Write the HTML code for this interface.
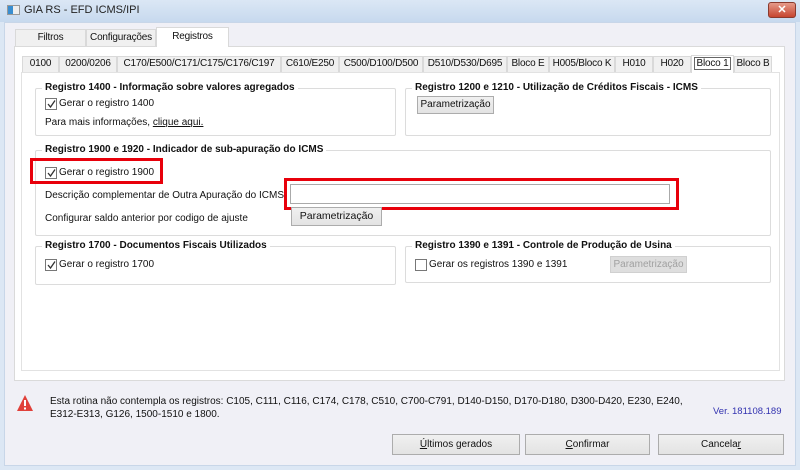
<!DOCTYPE html>
<html><head><meta charset="utf-8"><style>
*{box-sizing:border-box;margin:0;padding:0}
body{width:800px;height:470px;overflow:hidden;background:#dce7f4;font-family:"Liberation Sans",sans-serif;font-size:10px;color:#111;position:relative}
.a{position:absolute}
.title{left:0;top:0;width:800px;height:22px;background:linear-gradient(#dbe7f5,#c7d9ee);}
.win{left:4px;top:22px;width:792px;height:444px;background:#f0f0f6;border:1px solid #c8d6e8}
.tab{position:absolute;height:17px;border:1px solid #d9d9d9;border-bottom:none;background:#f0f0f0;text-align:center;line-height:15px;white-space:nowrap;font-size:10px;letter-spacing:-0.2px}
.panel{position:absolute;background:#fff;border:1px solid #dadada}
.gb{position:absolute;border:1px solid #dcdcdc;border-radius:2px}
.gt{position:absolute;top:-7px;left:6px;background:#fff;padding:0 3px;font-weight:bold;font-size:10px;white-space:nowrap}
.cb{position:absolute;width:12px;height:12px;border:1px solid #777;background:#fff}
.cb svg{position:absolute;left:0;top:0}
.btn{position:absolute;border:1px solid #acacac;background:linear-gradient(#f0f0f0,#e3e3e3);text-align:center;white-space:nowrap}
.t{position:absolute;white-space:nowrap}
.red{position:absolute;border:3px solid #e8000b}
</style></head><body>
<div class="a title"></div>
<div class="a" style="left:7px;top:5px;width:13px;height:10px;background:#eee;border:1px solid #999"><div style="width:5px;height:8px;background:#3a8ed0"></div></div>
<div class="t" style="left:24px;top:4px;font-size:11px;color:#222">GIA RS - EFD ICMS/IPI</div>
<div class="a" style="left:768px;top:2px;width:28px;height:16px;background:linear-gradient(#e59a8a,#c7452f);border:1px solid #8a3a2e;border-radius:3px;color:#fff;text-align:center;font-weight:bold;font-size:11px;line-height:14px">✕</div>
<div class="a win"></div>
<div class="tab" style="left:15px;top:29px;width:71px">Filtros</div>
<div class="tab" style="left:86px;top:29px;width:70px">Configurações</div>
<div class="tab" style="left:156px;top:27px;width:73px;height:20px;background:#fff;line-height:17px;z-index:2">Registros</div>
<div class="panel" style="left:14px;top:46px;width:771px;height:335px;background:#fff"></div>
<div class="tab" style="left:22px;top:56px;width:37px;height:16px;line-height:14px">0100</div>
<div class="tab" style="left:59px;top:56px;width:58px;height:16px;line-height:14px">0200/0206</div>
<div class="tab" style="left:117px;top:56px;width:164px;height:16px;line-height:14px">C170/E500/C171/C175/C176/C197</div>
<div class="tab" style="left:281px;top:56px;width:58px;height:16px;line-height:14px">C610/E250</div>
<div class="tab" style="left:339px;top:56px;width:84px;height:16px;line-height:14px">C500/D100/D500</div>
<div class="tab" style="left:423px;top:56px;width:84px;height:16px;line-height:14px">D510/D530/D695</div>
<div class="tab" style="left:507px;top:56px;width:42px;height:16px;line-height:14px">Bloco E</div>
<div class="tab" style="left:549px;top:56px;width:66px;height:16px;line-height:14px">H005/Bloco K</div>
<div class="tab" style="left:615px;top:56px;width:38px;height:16px;line-height:14px">H010</div>
<div class="tab" style="left:653px;top:56px;width:38px;height:16px;line-height:14px">H020</div>
<div class="tab" style="left:691px;top:55px;width:43px;height:18px;background:#fff;z-index:2"><span style="border:1px solid #666;padding:0 2px">Bloco 1</span></div>
<div class="tab" style="left:734px;top:56px;width:38px;height:16px;line-height:14px">Bloco B</div>
<div class="panel" style="left:21px;top:72px;width:759px;height:299px;border-color:#e2e2e2"></div>

<div class="gb" style="left:35px;top:88px;width:361px;height:48px"><div class="gt">Registro 1400 - Informação sobre valores agregados</div></div>
<div class="cb" style="left:45px;top:98px"><svg width="10" height="10"><path d="M2 5 L4.5 8 L9 1.5" stroke="#333" stroke-width="1.3" fill="none"/></svg></div>
<div class="t" style="left:59px;top:98px">Gerar o registro 1400</div>
<div class="t" style="left:45px;top:117px">Para mais informações, <u>clique aqui.</u></div>

<div class="gb" style="left:405px;top:88px;width:366px;height:48px"><div class="gt">Registro 1200 e 1210 - Utilização de Créditos Fiscais - ICMS</div></div>
<div class="btn" style="left:417px;top:96px;width:77px;height:18px;line-height:16px">Parametrização</div>

<div class="gb" style="left:35px;top:150px;width:736px;height:86px"><div class="gt">Registro 1900 e 1920 - Indicador de sub-apuração do ICMS</div></div>
<div class="red" style="left:30px;top:158px;width:133px;height:26px"></div>
<div class="cb" style="left:45px;top:167px"><svg width="10" height="10"><path d="M2 5 L4.5 8 L9 1.5" stroke="#333" stroke-width="1.3" fill="none"/></svg></div>
<div class="t" style="left:59px;top:167px">Gerar o registro 1900</div>
<div class="t" style="left:45px;top:190px">Descrição complementar de Outra Apuração do ICMS</div>
<div class="red" style="left:284px;top:178px;width:395px;height:32px"></div>
<div class="a" style="left:290px;top:184px;width:380px;height:20px;border:1px solid #aaa;background:#fff"></div>
<div class="t" style="left:45px;top:213px">Configurar saldo anterior por codigo de ajuste</div>
<div class="btn" style="left:291px;top:207px;width:91px;height:19px;line-height:17px;font-size:10.5px">Parametrização</div>

<div class="gb" style="left:35px;top:246px;width:361px;height:39px"><div class="gt">Registro 1700 - Documentos Fiscais Utilizados</div></div>
<div class="cb" style="left:45px;top:259px"><svg width="10" height="10"><path d="M2 5 L4.5 8 L9 1.5" stroke="#333" stroke-width="1.3" fill="none"/></svg></div>
<div class="t" style="left:59px;top:259px">Gerar o registro 1700</div>

<div class="gb" style="left:405px;top:246px;width:366px;height:37px"><div class="gt">Registro 1390 e 1391 - Controle de Produção de Usina</div></div>
<div class="cb" style="left:415px;top:259px"></div>
<div class="t" style="left:429px;top:259px">Gerar os registros 1390 e 1391</div>
<div class="btn" style="left:610px;top:256px;width:77px;height:17px;line-height:15px;color:#a0a0a0;background:#dedede;border-color:#d0d0d0">Parametrização</div>

<svg class="a" style="left:16px;top:394px" width="18" height="18"><path d="M9 1 L17 17 L1 17 Z" fill="#e0403a"/><rect x="8" y="6" width="2" height="6" fill="#fff"/><rect x="8" y="13.5" width="2" height="2" fill="#fff"/></svg>
<div class="t" style="left:50px;top:396px;font-size:10px">Esta rotina não contempla os registros: C105, C111, C116, C174, C178, C510, C700-C791, D140-D150, D170-D180, D300-D420, E230, E240,</div>
<div class="t" style="left:50px;top:409px;font-size:10px">E312-E313, G126, 1500-1510 e 1800.</div>
<div class="t" style="left:713px;top:406px;font-size:9.5px;color:#3333b0">Ver. 181108.189</div>

<div class="btn" style="left:392px;top:434px;width:128px;height:21px;line-height:19px"><u>Ú</u>ltimos gerados</div>
<div class="btn" style="left:525px;top:434px;width:125px;height:21px;line-height:19px"><u>C</u>onfirmar</div>
<div class="btn" style="left:658px;top:434px;width:126px;height:21px;line-height:19px">Cancela<u>r</u></div>
</body></html>
